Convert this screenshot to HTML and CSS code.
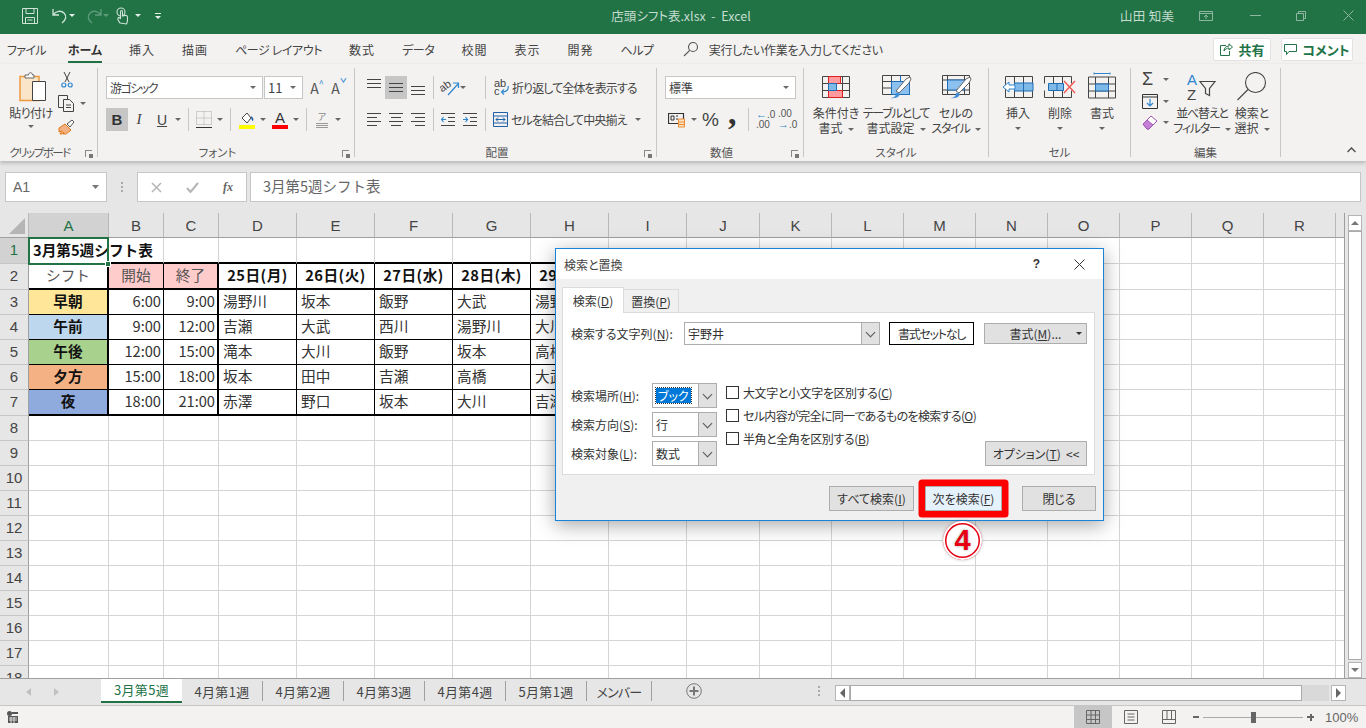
FILE: index.html
```html
<!DOCTYPE html>
<html lang="ja">
<head>
  <meta charset="UTF-8">
  <title>店頭シフト表.xlsx - Excel</title>
  <link rel="stylesheet" href="styles.css">
</head>
<body>
  <!-- title bar -->
  <header class="titlebar">
    <div class="qat">
      <svg class="qi-save" width="18" height="18" viewBox="0 0 18 18" fill="none" stroke="#cfe3d7"><path d="M1.5 1.5h15v15h-15zM5 1.5v5h8v-5M4.5 16.5v-6h9v6M6.5 13h5"/></svg>
      <svg class="qi-undo" width="18" height="18" viewBox="0 0 18 18" fill="none" stroke="#cfe3d7" stroke-width="1.3"><path d="M2 2v6h6M2 8c3-4 8-5 11-2s2 7-2 10"/></svg>
      <span class="caret caret-light"></span>
      <svg class="qi-redo" width="18" height="18" viewBox="0 0 18 18" fill="none" stroke="#5f9c7c" stroke-width="1.3"><path d="M16 2v6h-6M16 8c-3-4-8-5-11-2s-2 7 2 10"/></svg>
      <span class="caret caret-dim"></span>
      <svg class="qi-touch" width="14" height="18" viewBox="0 0 14 18" fill="none" stroke="#cfe3d7" stroke-width="1.1"><circle cx="5" cy="5" r="4"/><path d="M4 16c-1-2-3-3-2-5 1-1 2 0 2.500 1V5c0-2 2-2 2 0v4c2-1 5-1 5 1v3c0 2-.5 3-1 4z" fill="#217346"/></svg>
      <span class="caret caret-light caret-touch"></span>
      <span class="qi-more"></span>
    </div>
    <div class="doc-title">店頭シフト表.xlsx &nbsp;-&nbsp; Excel</div>
    <div class="user-name">山田 知美</div>
    <div class="win-btns">
      <svg width="14" height="10" viewBox="0 0 14 10" fill="none" stroke="#8fb8a2"><path d="M.5.5h13v9H.5zM.5 2.500h13M7 8V4.500M5 6l2-2 2 2"/></svg>
      <svg width="11" height="1" viewBox="0 0 11 1"><path d="M0 0h11v1H0z" fill="#8fb8a2"/></svg>
      <svg width="10" height="10" viewBox="0 0 10 10" fill="none" stroke="#8fb8a2"><path d="M.5 2.500h7v7h-7zM2.500 2.500v-2h7v7h-2"/></svg>
      <svg width="11" height="11" viewBox="0 0 11 11" stroke="#8fb8a2"><path d="M.5.5l10 10M10.500.5l-10 10"/></svg>
    </div>
  </header>

  <!-- ribbon tabs -->
  <nav class="tabs">
    <span class="tab-tight">ファイル</span>
    <span class="tab-on">ホーム</span>
    <span class="tab-kanji">挿入</span>
    <span class="tab-kanji">描画</span>
    <span class="tab-tight2">ページ レイアウト</span>
    <span class="tab-kanji">数式</span>
    <span class="tab-tight2">データ</span>
    <span class="tab-kanji">校閲</span>
    <span class="tab-kanji">表示</span>
    <span class="tab-kanji">開発</span>
    <span class="tab-tight2">ヘルプ</span>
    <div class="tell-me">
      <svg width="16" height="16" viewBox="0 0 16 16" fill="none" stroke="#555" stroke-width="1.1"><circle cx="10" cy="6" r="4.500"/><path d="M6.700 9.300L1 15"/></svg>
      <span>実行したい作業を入力してください</span>
    </div>
    <div class="tab-actions">
      <button class="pill pill-share"><svg width="14" height="13" viewBox="0 0 14 13" fill="none" stroke="#217346"><path d="M7 2.500H1.500v10h9V8M5 8c0-3 2-5 5-5V.8L13.500 4 10 7V5C8 5 6.500 6 5 8z"/></svg>共有</button>
      <button class="pill pill-comment"><svg width="13" height="13" viewBox="0 0 13 13" fill="none" stroke="#217346"><path d="M.5 1.500h12v7H5L2.500 11.500v-3h-2z"/></svg>コメント</button>
    </div>
  </nav>

  <!-- ribbon -->
  <section class="ribbon">
    <div class="group g-clip">
      <div class="clip-body">
        <div class="paste">
          <svg width="28" height="30" viewBox="0 0 28 30" fill="none"><path d="M1 4.500h19v24H1z" fill="#fbe5c8" stroke="#ed9b40" stroke-width="1.500"/><path d="M6 6V3h3.500c0-3 4-3 4 0H15v3z" fill="#fff" stroke="#666"/><path d="M13.500 9.500h13v19h-13z" fill="#fff" stroke="#444"/></svg>
          <span class="paste-label">貼り付け</span>
          <span class="caret"></span>
        </div>
        <div class="clip-tools">
          <svg class="ic-cut" width="12" height="17" viewBox="0 0 12 17" fill="none" stroke="#444"><path d="M3 1l5 10M9 1L4 11"/><circle cx="2.800" cy="14" r="2" stroke="#2e86d0" stroke-width="1.200"/><circle cx="9.200" cy="14" r="2" stroke="#2e86d0" stroke-width="1.200"/></svg>
          <div class="row-mid">
            <svg width="17" height="17" viewBox="0 0 17 17" fill="#f3f2f1" stroke="#444"><path d="M.5.500h9v12h-9z"/><path d="M5.500 4.500h6l4 4v8h-10zM8 10h5M8 12.500h5"/></svg>
            <span class="caret"></span>
          </div>
          <svg width="17" height="16" viewBox="0 0 17 16"><path d="M1 9l6-4 6 6-5 4H5l1-2-2 2H2l2-3-3 1z" fill="#f4b183" stroke="#e07b1a"/><path d="M9 5l5-4 2 2-4 5z" fill="#fff" stroke="#555"/></svg>
        </div>
      </div>
      <div class="group-label">クリップボード</div>
      <span class="launcher"></span>
    </div>

    <div class="group g-font">
      <div class="tool-row">
        <div class="combo combo-font"><span>游ゴシック</span><span class="caret"></span></div>
        <div class="combo combo-size"><span>11</span><span class="caret"></span></div>
        <span class="tool tool-grow">A<i>^</i></span>
        <span class="tool tool-grow">A<i class="down">ˇ</i></span>
      </div>
      <div class="tool-row row-second">
        <span class="tool tool-on fmt-b">B</span>
        <span class="tool fmt-i">I</span>
        <span class="tool fmt-u">U</span><span class="caret caret-gap"></span>
        <span class="sep"></span>
        <svg class="ic-border" width="16" height="18" viewBox="0 0 16 18" fill="none"><path d="M.5.500h15v13H.5zM8 .500v13M.5 7h15" stroke="#aaa" stroke-dasharray="1 1"/><path d="M0 16.500h16" stroke="#333"/></svg><span class="caret caret-gap"></span>
        <span class="sep"></span>
        <svg class="ic-fill" width="16" height="18" viewBox="0 0 16 18"><path d="M3 7l5-5 4 5-4 5z" fill="#fff" stroke="#444"/><path d="M12 5c2 1 3 3 2 5-1 0-2-2-2-5z" fill="#1f5fa8"/><path d="M0 14h16v4H0z" fill="#ff0"/></svg><span class="caret caret-gap"></span>
        <span class="font-color">A</span><span class="caret caret-gap"></span>
        <span class="sep"></span>
        <span class="phonetic">ア<b></b></span><span class="caret caret-phon"></span>
      </div>
      <div class="group-label">フォント</div>
      <span class="launcher"></span>
    </div>

    <div class="group g-align">
      <div class="tool-row">
        <span class="tool tool-top"><svg width="14" height="10" viewBox="0 0 14 10" stroke="#444"><path d="M0 .500h14M0 4.500h14M0 8.500h14" /></svg></span>
        <span class="tool tool-on"><svg width="14" height="10" viewBox="0 0 14 10" stroke="#444"><path d="M0 .500h14M0 4.500h14M0 8.500h14"/></svg></span>
        <span class="tool tool-low"><svg width="14" height="10" viewBox="0 0 14 10" stroke="#444"><path d="M0 .500h14M0 4.500h14M0 8.500h14"/></svg></span>
        <span class="sep"></span>
        <svg class="ic-orient" width="20" height="16" viewBox="0 0 20 16" fill="none"><text x="0" y="10" class="ic-text" transform="rotate(-35 5 8)">ab</text><path d="M8 15L18 4M13 3h5.500v5" stroke="#2e86d0" stroke-width="1.200"/></svg>
        <span class="caret"></span>
        <span class="sep sep-wide"></span>
        <svg class="ic-wrap" width="15" height="17" viewBox="0 0 15 17" fill="none"><text x="0" y="7.500" class="ic-text">ab</text><text x="0" y="16" class="ic-text">c</text><path d="M14 7c1 4-2 6-6 6M10 10.500L7.500 13l2.500 2.500" stroke="#2e86d0" stroke-width="1.200"/></svg>
        <span class="wide-label">折り返して全体を表示する</span>
      </div>
      <div class="tool-row row-second">
        <span class="tool"><svg width="14" height="13" viewBox="0 0 14 13" stroke="#444"><path d="M0 .500h14M0 4.500h10M0 8.500h14M0 12.500h10"/></svg></span>
        <span class="tool"><svg width="14" height="13" viewBox="0 0 14 13" stroke="#444"><path d="M0 .500h14M2 4.500h10M0 8.500h14M2 12.500h10"/></svg></span>
        <span class="tool"><svg width="14" height="13" viewBox="0 0 14 13" stroke="#444"><path d="M0 .500h14M4 4.500h10M0 8.500h14M4 12.500h10"/></svg></span>
        <span class="sep"></span>
        <svg width="14" height="13" viewBox="0 0 14 13" fill="none"><path d="M0 .500h14M7 4.500h7M7 8.500h7M0 12.500h14" stroke="#444"/><path d="M5 6.500H0M2.500 4L.5 6.500l2 2.500" stroke="#2e86d0" stroke-width="1.200"/></svg>
        <svg class="ic-indent2" width="14" height="13" viewBox="0 0 14 13" fill="none"><path d="M0 .500h14M7 4.500h7M7 8.500h7M0 12.500h14" stroke="#444"/><path d="M0 6.500h5M2.500 4l2 2.500-2 2.500" stroke="#2e86d0" stroke-width="1.200"/></svg>
        <span class="sep sep-merge"></span>
        <svg width="15" height="15" viewBox="0 0 15 15" fill="none"><path d="M.5.500h14v14H.5zM.5 4h14M.5 11h14" stroke="#1f5fa8"/><path d="M3 7.500h9M5 5.500l-2 2 2 2M10 5.500l2 2-2 2" stroke="#1f5fa8"/></svg>
        <span class="wide-label">セルを結合して中央揃え</span><span class="caret caret-merge"></span>
      </div>
      <div class="group-label">配置</div>
      <span class="launcher"></span>
    </div>

    <div class="group g-number">
      <div class="tool-row">
        <div class="combo combo-num"><span>標準</span><span class="caret"></span></div>
      </div>
      <div class="tool-row row-second">
        <svg class="ic-acct" width="18" height="16" viewBox="0 0 18 16" fill="none"><path d="M.5 1.500h15v10H.5z" stroke="#333" stroke-width="1.200"/><path d="M3 4h3v4H3zM8 4h2M8 7h2" stroke="#333"/><path d="M10.500 7h6v8h-6z" fill="#fbe5c8" stroke="#ed8b2e"/><path d="M10.500 10h6M10.500 12.500h6" stroke="#ed8b2e"/></svg>
        <span class="caret caret-gap"></span>
        <span class="num-pct">%</span>
        <span class="num-comma">,</span>
        <span class="sep"></span>
        <span class="num-dec"><em>←</em>.0<br>.00</span>
        <span class="num-dec num-dec2">.00<br><em>→</em>.0</span>
      </div>
      <div class="group-label">数値</div>
      <span class="launcher"></span>
    </div>

    <div class="group g-styles">
      <div class="big-row">
        <div class="big big-cond">
          <svg width="28" height="22" viewBox="0 0 28 22" fill="none"><path d="M.5.500h27v21H.5zM.5 7.500h27M.5 14.500h27M6.500.500v21M14.500.500v21M20.500.500v21" stroke="#444"/><path d="M6.500.500h12v7h-12zM6.500 14.500h14v7h-14z" fill="#ff9a9f" stroke="#e02020"/><path d="M6.500 7.500h8v7h-8z" fill="#7fb9e8" stroke="#1f6db5"/></svg>
          <span>条件付き</span><span>書式<i class="caret caret-in"></i></span>
        </div>
        <div class="big big-table">
          <svg class="ic-brush" width="30" height="24" viewBox="0 0 30 24" fill="none"><path d="M.5.500h27v19H.5zM.5 6.500h27M.5 13h27M9.500.500v19M18.500.500v19" stroke="#444"/><path d="M9.500 6.500h18v13h-18z" fill="#8cc0ee" stroke="#1f6db5"/><path d="M18.500 .5v6h9" stroke="#1f6db5"/><path d="M14 16l10-12 4-2 1 2-2 4-10 10z" fill="#fff" stroke="#666"/><path d="M8 23c3 0 6-1 6-5l3 0c2 3-2 6-9 5z" fill="#3f8ed8"/></svg>
          <span class="label-tight">テーブルとして</span><span>書式設定<i class="caret caret-in"></i></span>
        </div>
        <div class="big big-cell">
          <svg class="ic-brush" width="30" height="24" viewBox="0 0 30 24" fill="none"><path d="M.5.500h27v19H.5zM.5 5h27M5.500.500v19M.5 15h27M22.500.500v19" stroke="#444"/><path d="M5.500 5h17v10h-17z" fill="#8cc0ee" stroke="#1f6db5"/><path d="M14 16l10-12 4-2 1 2-2 4-10 10z" fill="#fff" stroke="#666"/><path d="M8 23c3 0 6-1 6-5l3 0c2 3-2 6-9 5z" fill="#3f8ed8"/></svg>
          <span>セルの</span><span class="label-tight">スタイル<i class="caret caret-in"></i></span>
        </div>
      </div>
      <div class="group-label">スタイル</div>
    </div>

    <div class="group g-cells">
      <div class="big-row">
        <div class="big big-cellbtn">
          <svg width="32" height="22" viewBox="0 0 32 22" fill="none"><path d="M3.500.500h27v21h-27zM.5 7.500M12.500.500v21M21.500.500v21" stroke="#444"/><path d="M12.500 7h18.500v8H12.500z" fill="#7fb9e8" stroke="#1f6db5"/><path d="M21.500 7v8" stroke="#1f6db5"/><path d="M1 11l6-5v3h6v4H7v3z" fill="#fff" stroke="#2e86d0"/></svg>
          <span>挿入</span><i class="caret caret-under"></i>
        </div>
        <div class="big big-cellbtn">
          <svg width="32" height="22" viewBox="0 0 32 22" fill="none"><path d="M.5.500h27M.5 21.500h27M.5.500v7M.5 14.500v7M9.500.500v7M9.500 14.500v7M18.500.500v7M18.500 14.500v7M27.500.500v7M27.500 14.500v7" stroke="#444"/><path d="M4.500 7.500h15v7h-15z" fill="#7fb9e8" stroke="#1f6db5"/><path d="M13 7.500v7" stroke="#1f6db5"/><path d="M20 5l11 12M31 5L20 17" stroke="#ef5350" stroke-width="1.300"/></svg>
          <span>削除</span><i class="caret caret-under"></i>
        </div>
        <div class="big big-cellbtn">
          <svg class="ic-fmt" width="28" height="27" viewBox="0 0 28 26" fill="none"><path d="M6 1h16M6 0v2M22 0v2" stroke="#2e86d0"/><path d="M.5 4.500h27v21H.5zM.5 11.500h27M.5 18.500h27M7.500 4.500v21M20.500 4.500v21" stroke="#444"/><path d="M7.500 11.500h13v7h-13z" fill="#7fb9e8" stroke="#1f6db5"/></svg>
          <span>書式</span><i class="caret caret-under"></i>
        </div>
      </div>
      <div class="group-label">セル</div>
    </div>

    <div class="group g-edit">
      <div class="edit-tools">
        <div class="row-mid"><span class="ic-sigma">Σ</span><span class="caret"></span></div>
        <div class="row-mid">
          <svg width="16" height="15" viewBox="0 0 16 15" fill="none"><path d="M.5 .5h15v14H.5z" stroke="#333"/><path d="M.5 3h15" stroke="#333"/><path d="M8 5v7M5 9l3 3 3-3" stroke="#2e86d0" stroke-width="1.200"/></svg>
          <span class="caret"></span>
        </div>
        <div class="row-mid">
          <svg width="16" height="15" viewBox="0 0 16 15"><path d="M1 9l8-8 6 5-8 8H5z" fill="#fff" stroke="#a055b5"/><path d="M1 9l4-4 6 5-4 4H5z" fill="#c780d8" stroke="#a055b5"/></svg>
          <span class="caret"></span>
        </div>
      </div>
      <div class="big big-sort">
        <svg width="30" height="28" viewBox="0 0 30 28" fill="none"><text x="0" y="12" class="ic-az ic-a">A</text><text x="0" y="27" class="ic-az">Z</text><path d="M13 9h15l-5.500 7v7l-4-2v-5z" stroke="#444" stroke-width="1.200"/></svg>
        <span class="label-tight">並べ替えと</span><span class="label-tight">フィルター<i class="caret caret-in"></i></span>
      </div>
      <div class="big big-find">
        <svg width="30" height="29" viewBox="0 0 30 29" fill="none" stroke="#444" stroke-width="1.100"><circle cx="18.500" cy="10.500" r="10"/><path d="M11 17.500L.5 28"/></svg>
        <span>検索と</span><span>選択<i class="caret caret-in"></i></span>
      </div>
      <div class="group-label">編集</div>
    </div>
    <svg class="ribbon-collapse" width="9" height="6" viewBox="0 0 9 6" fill="none" stroke="#555" stroke-width="1.500"><path d="M.5 5l4-4 4 4"/></svg>
  </section>

  <!-- formula bar -->
  <div class="formula">
    <div class="namebox"><span>A1</span><svg width="7" height="4" viewBox="0 0 7 4"><path d="M0 0h7L3.500 4z" fill="#777"/></svg></div>
    <span class="formula-dots"></span>
    <div class="fx-box">
      <svg width="11" height="11" viewBox="0 0 11 11" stroke="#b5b5b5" stroke-width="1.500"><path d="M1 1l9 9M10 1l-9 9"/></svg>
      <svg width="13" height="11" viewBox="0 0 13 11" fill="none" stroke="#b5b5b5" stroke-width="2"><path d="M1 6l3.500 4L12 1"/></svg>
      <span class="fx">fx</span>
    </div>
    <div class="formula-input">3月第5週シフト表</div>
  </div>

  <!-- sheet -->
  <main class="sheet">
    <div class="grid-wrap">
      <table class="grid">
        <colgroup>
          <col class="c-row"><col class="c-a"><col class="c-bc"><col class="c-bc">
          <col class="c-d"><col class="c-d"><col class="c-d"><col class="c-d"><col class="c-d"><col class="c-d">
          <col class="c-j"><col class="c-k"><col class="c-k"><col class="c-k"><col class="c-k"><col class="c-k"><col class="c-k"><col class="c-k"><col class="c-k"><col class="c-k">
        </colgroup>
        <thead>
          <tr>
            <th class="corner"><span></span></th><th class="active-h">A</th><th>B</th><th>C</th><th>D</th><th>E</th><th>F</th><th>G</th><th>H</th><th>I</th><th>J</th><th>K</th><th>L</th><th>M</th><th>N</th><th>O</th><th>P</th><th>Q</th><th>R</th><th></th>
          </tr>
        </thead>
        <tbody>
          <tr class="r-title"><th class="active-h">1</th><td class="title-cell">3月第5週シフト表</td><td></td><td></td><td></td><td></td><td></td><td></td><td></td><td></td><td></td><td></td><td></td><td></td><td></td><td></td><td></td><td></td><td></td><td></td></tr>
          <tr class="r-duty r-head"><th>2</th><td class="ctr">シフト</td><td class="ctr f-time">開始</td><td class="ctr f-time">終了</td><td class="day">25日(月)</td><td class="day">26日(火)</td><td class="day">27日(水)</td><td class="day">28日(木)</td><td class="day">29日(金)</td><td></td><td></td><td></td><td></td><td></td><td></td><td></td><td></td><td></td><td></td><td></td></tr>
          <tr class="r-duty"><th>3</th><td class="shift f-early">早朝</td><td class="num">6:00</td><td class="num">9:00</td><td>湯野川</td><td>坂本</td><td>飯野</td><td>大武</td><td>湯野川</td><td></td><td></td><td></td><td></td><td></td><td></td><td></td><td></td><td></td><td></td><td></td></tr>
          <tr class="r-duty"><th>4</th><td class="shift f-am">午前</td><td class="num">9:00</td><td class="num">12:00</td><td>吉瀬</td><td>大武</td><td>西川</td><td>湯野川</td><td>大川</td><td></td><td></td><td></td><td></td><td></td><td></td><td></td><td></td><td></td><td></td><td></td></tr>
          <tr class="r-duty"><th>5</th><td class="shift f-pm">午後</td><td class="num">12:00</td><td class="num">15:00</td><td>滝本</td><td>大川</td><td>飯野</td><td>坂本</td><td>高橋</td><td></td><td></td><td></td><td></td><td></td><td></td><td></td><td></td><td></td><td></td><td></td></tr>
          <tr class="r-duty"><th>6</th><td class="shift f-eve">夕方</td><td class="num">15:00</td><td class="num">18:00</td><td>坂本</td><td>田中</td><td>吉瀬</td><td>高橋</td><td>大武</td><td></td><td></td><td></td><td></td><td></td><td></td><td></td><td></td><td></td><td></td><td></td></tr>
          <tr class="r-duty r-last"><th>7</th><td class="shift f-night">夜</td><td class="num">18:00</td><td class="num">21:00</td><td>赤澤</td><td>野口</td><td>坂本</td><td>大川</td><td>吉瀬</td><td></td><td></td><td></td><td></td><td></td><td></td><td></td><td></td><td></td><td></td><td></td></tr>
          <tr><th>8</th><td></td><td></td><td></td><td></td><td></td><td></td><td></td><td></td><td></td><td></td><td></td><td></td><td></td><td></td><td></td><td></td><td></td><td></td><td></td></tr>
          <tr><th>9</th><td></td><td></td><td></td><td></td><td></td><td></td><td></td><td></td><td></td><td></td><td></td><td></td><td></td><td></td><td></td><td></td><td></td><td></td><td></td></tr>
          <tr><th>10</th><td></td><td></td><td></td><td></td><td></td><td></td><td></td><td></td><td></td><td></td><td></td><td></td><td></td><td></td><td></td><td></td><td></td><td></td><td></td></tr>
          <tr><th>11</th><td></td><td></td><td></td><td></td><td></td><td></td><td></td><td></td><td></td><td></td><td></td><td></td><td></td><td></td><td></td><td></td><td></td><td></td><td></td></tr>
          <tr><th>12</th><td></td><td></td><td></td><td></td><td></td><td></td><td></td><td></td><td></td><td></td><td></td><td></td><td></td><td></td><td></td><td></td><td></td><td></td><td></td></tr>
          <tr><th>13</th><td></td><td></td><td></td><td></td><td></td><td></td><td></td><td></td><td></td><td></td><td></td><td></td><td></td><td></td><td></td><td></td><td></td><td></td><td></td></tr>
          <tr><th>14</th><td></td><td></td><td></td><td></td><td></td><td></td><td></td><td></td><td></td><td></td><td></td><td></td><td></td><td></td><td></td><td></td><td></td><td></td><td></td></tr>
          <tr><th>15</th><td></td><td></td><td></td><td></td><td></td><td></td><td></td><td></td><td></td><td></td><td></td><td></td><td></td><td></td><td></td><td></td><td></td><td></td><td></td></tr>
          <tr><th>16</th><td></td><td></td><td></td><td></td><td></td><td></td><td></td><td></td><td></td><td></td><td></td><td></td><td></td><td></td><td></td><td></td><td></td><td></td><td></td></tr>
          <tr><th>17</th><td></td><td></td><td></td><td></td><td></td><td></td><td></td><td></td><td></td><td></td><td></td><td></td><td></td><td></td><td></td><td></td><td></td><td></td><td></td></tr>
          <tr><th>18</th><td></td><td></td><td></td><td></td><td></td><td></td><td></td><td></td><td></td><td></td><td></td><td></td><td></td><td></td><td></td><td></td><td></td><td></td><td></td></tr>
        </tbody>
      </table>
      <div class="cell-cursor"><span></span></div>
    </div>
    <div class="vscroll">
      <span class="vbtn"><i class="tri-up"></i></span>
      <span class="vthumb"></span>
      <span class="vbtn"><i class="tri-down"></i></span>
    </div>
  </main>

  <!-- sheet tabs -->
  <div class="sheetbar">
    <div class="sheet-nav"><i class="nav-l"></i><i class="nav-r"></i></div>
    <div class="sheet-tabs">
      <span class="sheet-on">3月第5週</span>
      <span>4月第1週</span>
      <span>4月第2週</span>
      <span>4月第3週</span>
      <span>4月第4週</span>
      <span>5月第1週</span>
      <span class="sheet-last">メンバー</span>
    </div>
    <svg class="sheet-add" width="16" height="16" viewBox="0 0 16 16" fill="none" stroke="#777"><circle cx="8" cy="8" r="7.300"/><path d="M8 3.500v9M3.500 8h9" stroke-width="2"/></svg>
    <span class="bar-dots"></span>
    <div class="hscroll">
      <span class="hbtn"><i class="tri-left"></i></span>
      <span class="hthumb"></span>
      <span class="htrack"></span>
      <span class="hbtn"><i class="tri-right"></i></span>
    </div>
  </div>

  <!-- status bar -->
  <footer class="statusbar">
    <svg width="11" height="12" viewBox="0 0 11 12" fill="#555"><circle cx="2.500" cy="2.500" r="2.500"/><path d="M5 1h6v2H5zM1 5h10v7H1z"/><path d="M2 7h8M2 9h8M4 6v6M7 6v6" stroke="#f3f2f1" stroke-width=".8"/></svg>
    <div class="views">
      <span class="view view-on"><svg width="14" height="14" viewBox="0 0 14 14" fill="none" stroke="#666"><path d="M.5.500h13v13H.5zM.5 5h13M.5 9.500h13M5 .500v13M9.500.500v13"/></svg></span>
      <span class="view"><svg width="14" height="14" viewBox="0 0 14 14" fill="none" stroke="#666"><path d="M.5.500h13v13H.5zM3.500 4h7M3.500 7h7M3.500 10h7"/></svg></span>
      <span class="view"><svg width="14" height="14" viewBox="0 0 14 14" fill="none" stroke="#666"><path d="M.5.500h13v13H.5zM.5 9.500h13M5 .500v9M9.500.500v9"/></svg></span>
    </div>
    <div class="zoom">
      <span class="z-minus"></span>
      <span class="z-track"><i></i></span>
      <span class="z-plus"></span>
      <span class="z-val">100%</span>
    </div>
  </footer>

  <!-- find dialog -->
  <div class="dialog">
    <div class="dlg-title">
      <span>検索と置換</span>
      <span class="dlg-help">?</span>
      <svg width="11" height="11" viewBox="0 0 11 11" stroke="#333"><path d="M.5.500l10 10M10.500.500l-10 10"/></svg>
    </div>
    <div class="dlg-body">
      <div class="dlg-tabs">
        <span class="dlg-tab dlg-tab-on"><span>検索(<u>D</u>)</span></span>
        <span class="dlg-tab"><span>置換(<u>P</u>)</span></span>
      </div>
      <div class="dlg-panel">
        <div class="find-row">
          <label class="find-label">検索する文字列(<u>N</u>):</label>
          <div class="dlg-combo"><span>宇野井</span><i class="chev"></i></div>
          <span class="fmt-none">書式セットなし</span>
          <button class="dbtn fmt-btn">書式(<u>M</u>)...<i class="caret caret-dark"></i></button>
        </div>
        <div class="find-opts">
          <div class="opt-selects">
            <label>検索場所(<u>H</u>):</label>
            <div class="dlg-sel"><span class="sel-on">ブック</span><i class="chev"></i></div>
            <label>検索方向(<u>S</u>):</label>
            <div class="dlg-sel"><span>行</span><i class="chev"></i></div>
            <label>検索対象(<u>L</u>):</label>
            <div class="dlg-sel"><span>数式</span><i class="chev"></i></div>
          </div>
          <div class="opt-checks">
            <label><i class="chk"></i><span>大文字と小文字を区別する(<u>C</u>)</span></label>
            <label><i class="chk"></i><span class="check-long">セル内容が完全に同一であるものを検索する(<u>O</u>)</span></label>
            <label><i class="chk"></i><span>半角と全角を区別する(<u>B</u>)</span></label>
          </div>
          <button class="dbtn opt-btn">オプション(<u>T</u>) &nbsp;&lt;&lt;</button>
        </div>
      </div>
      <div class="dlg-actions">
        <button class="dbtn act-all">すべて検索(<u>I</u>)</button>
        <button class="dbtn act-next">次を検索(<u>F</u>)</button>
        <button class="dbtn act-close">閉じる</button>
      </div>
    </div>
  </div>

  <!-- callout number -->
  <div class="callout"><span>4</span></div>
</body>
</html>
```

FILE: styles.css
```css
* {
  box-sizing: border-box;
}

html, body {
  margin: 0;
  height: 100%;
}

body {
  position: relative;
  width: 1366px;
  height: 728px;
  overflow: hidden;
  font-family: "Noto Sans CJK JP", sans-serif;
  font-size: 12px;
  font-feature-settings: "palt";
  color: #444;
  background: #e6e6e6;
}

svg {
  display: block;
  flex: none;
}

i {
  font-style: normal;
}

/* title bar */
.titlebar {
  display: flex;
  align-items: center;
  height: 34px;
  padding-bottom: 3px;
  background: #217346;
  color: #c4dccf;
}

.qat {
  display: flex;
  align-items: center;
  width: 540px;
  padding-left: 21px;
}

.qi-undo { margin-left: 12px; }
.qi-redo { margin-left: 10px; }
.qi-touch { margin-left: 7px; }
.caret-touch { margin-left: 5px; }

.caret {
  display: inline-block;
  flex: none;
  width: 0;
  height: 0;
  border-left: 3.500px solid transparent;
  border-right: 3.500px solid transparent;
  border-top: 3.500px solid #666;
}

.caret-light { border-top-color: #e4efe9; }
.caret-dim { border-top-color: #5f9c7c; }

.qi-more {
  width: 6px;
  height: 6px;
  margin-left: 14px;
  border-top: 1px solid #e4efe9;
  position: relative;
}

.qi-more::after {
  content: "";
  position: absolute;
  left: 0;
  top: 2px;
  border-left: 3px solid transparent;
  border-right: 3px solid transparent;
  border-top: 3px solid #e4efe9;
}

.doc-title {
  width: 300px;
  font-size: 12.500px;
  text-align: center;
  margin-left: -9px;
}

.user-name {
  margin-left: 289px;
  font-size: 12.500px;
  letter-spacing: .3px;
}

.win-btns {
  display: flex;
  align-items: center;
  margin-left: 25px;
}

.win-btns svg:nth-child(2) { margin-left: 37px; }
.win-btns svg:nth-child(3) { margin-left: 35px; }
.win-btns svg:nth-child(4) { margin-left: 37px; }

/* tabs */
.tabs {
  display: flex;
  align-items: center;
  gap: 27px;
  height: 30px;
  padding: 0 13px 0 7px;
  background: #f3f2f1;
  font-size: 12px;
  color: #444;
}

.tab-tight { letter-spacing: -.7px; }
.tab-tight2 { letter-spacing: -.4px; }
.tab-kanji { letter-spacing: 1px; }

.tab-on {
  position: relative;
  margin-left: -5px;
  font-weight: 700;
  color: #333;
}

.tab-on::after {
  content: "";
  position: absolute;
  left: 0;
  right: 0;
  top: 20px;
  height: 2px;
  background: #217346;
}

.tell-me {
  display: flex;
  align-items: center;
  gap: 10px;
  margin-left: 2px;
  letter-spacing: -.3px;
}

.tab-actions {
  display: flex;
  gap: 10px;
  margin-left: auto;
}

.pill {
  display: flex;
  align-items: center;
  justify-content: center;
  height: 23px;
  gap: 5px;
  padding: 0;
  background: #fff;
  border: 1px solid #e3e2e1;
  border-radius: 2px;
  font: inherit;
  font-size: 13px;
  font-weight: 700;
  color: #217346;
}

.pill-share { width: 58px; }
.pill-comment { width: 72px; }

/* ribbon */
.ribbon {
  position: relative;
  z-index: 2;
  display: flex;
  height: 97px;
  padding-top: 4px;
  background: #f3f2f1;
  box-shadow: 0 2px 4px rgba(0, 0, 0, .22);
}

.group {
  position: relative;
  height: 89px;
  border-right: 1px solid #c6c6c6;
}

.g-clip { width: 98px; }
.g-font { width: 257px; padding: 8px 0 0 8px; }
.g-align { width: 302px; padding: 8px 0 0 8px; }
.g-number { width: 147px; padding: 8px 0 0 8px; }
.g-styles { width: 185px; }
.g-cells { width: 142px; }
.g-edit { width: 150px; display: flex; }

.group-label {
  position: absolute;
  left: 0;
  right: 0;
  bottom: -3px;
  height: 16px;
  line-height: 16px;
  font-size: 11.500px;
  text-align: center;
  color: #555;
}

.g-clip .group-label { padding-right: 18px; letter-spacing: -1.500px; }
.g-font .group-label, .g-align .group-label, .g-number .group-label { padding-right: 17px; }

.launcher {
  position: absolute;
  right: 5px;
  bottom: 0;
  width: 7px;
  height: 7px;
  border-left: 1px solid #888;
  border-top: 1px solid #888;
}

.launcher::after {
  content: "";
  position: absolute;
  right: -1px;
  bottom: -1px;
  width: 4px;
  height: 4px;
  background: #777;
}

.tool-row {
  display: flex;
  align-items: center;
  height: 23px;
}

.row-second { margin-top: 9px; }

.tool {
  display: flex;
  align-items: center;
  justify-content: center;
  flex: none;
  width: 22px;
  height: 23px;
}

.tool-on { background: #c6c6c6; }
.tool-low svg { margin-top: 6px; }
.tool-top svg { margin-top: -8px; }

.sep {
  flex: none;
  width: 1px;
  height: 23px;
  margin: 0 7px;
  background: #c6c6c6;
}

.caret-gap { margin-left: 5px; }

.combo {
  display: flex;
  align-items: center;
  justify-content: space-between;
  height: 23px;
  padding: 0 6px 0 3px;
  background: #fff;
  border: 1px solid #c6c6c6;
  color: #444;
}

.combo-font { width: 157px; margin-right: 1px; letter-spacing: -1.500px; }
.combo-size { width: 39px; font-size: 13px; }
.combo-num { width: 131px; font-size: 12px; }

.tool-grow {
  width: 22px;
  margin-left: 0;
  font-size: 14px;
  color: #555;
  position: relative;
}

.tool-grow i {
  font-size: 9px;
  color: #2e86d0;
  margin-top: -9px;
}

.tool-grow i.down { font-size: 12px; margin-top: -8px; }

.combo-size + .tool-grow { margin-left: 3px; }

.fmt-b { font: 700 15px "Liberation Sans", sans-serif; color: #333; }
.fmt-i { font: italic 15px "Liberation Serif", serif; color: #444; }
.fmt-u { font: 14px "Liberation Sans", sans-serif; text-decoration: underline; color: #444; width: 18px; margin-left: 3px; }
.fmt-u + .caret { margin-left: 4px; }

.ic-fill { margin: 0 0 0 1px; }

.font-color {
  width: 16px;
  margin-left: 6px;
  height: 18px;
  border-bottom: 4px solid #f00;
  font: 15px/14px "Liberation Sans", sans-serif;
  text-align: center;
  color: #333;
}

.phonetic {
  position: relative;
  width: 12px;
  margin-left: 2px;
  height: 18px;
  font-size: 9px;
  line-height: 11px;
  text-align: center;
  color: #888;
}

.phonetic b {
  display: block;
  height: 6px;
  margin-top: 1px;
  background: repeating-linear-gradient(#999 0 1px, transparent 1px 2px);
}

.caret-phon { margin-left: 7px; }

.ic-text {
  font: 11px "Liberation Sans", sans-serif;
  fill: #444;
}

.g-align .sep { margin: 0 7px 0 4px; }
.ic-orient { margin-left: -1px; }
.g-align .sep-wide { margin: 0 8px 0 19px; }
.wide-label { margin-left: 3px; font-size: 12px; color: #444; white-space: nowrap; letter-spacing: -.9px; }
.ic-indent2 { margin-left: 8px; }
.g-align .sep-merge { margin: 0 7px 0 8px; }
.ic-merge { margin-left: 0; }
.caret-merge { margin-left: 8px; }

.ic-acct { margin-left: 3px; }
.num-pct { width: 18px; margin-left: 5px; font: 19px "Liberation Sans", sans-serif; color: #444; }
.num-comma { width: 10px; margin: 0 0 14px 8px; font: 700 34px/14px "Liberation Serif", serif; color: #333; }
.g-number .sep { margin: 0 7px 0 10px; }
.num-dec { width: 20px; font: 10px/10px "Liberation Sans", sans-serif; color: #555; }
.num-dec2 { margin-left: 2px; }
.num-dec em { font-style: normal; color: #2e86d0; font-size: 11px; }

.big-row {
  display: flex;
  padding-left: 2px;
}

.big {
  display: flex;
  flex-direction: column;
  align-items: center;
  padding-top: 7px;
  line-height: 15px;
  white-space: nowrap;
  color: #444;
}

.big svg { height: 24px; margin-bottom: 6px; }
.label-tight { letter-spacing: -1.200px; }
.ic-brush { margin-left: 2px; }
.big-cond { width: 60px; }
.big-table { width: 60px; }
.big-cell { width: 60px; }
.big-cellbtn { width: 42px; }
.g-cells .big-row { padding-left: 8px; }
.g-styles .big-row { padding-left: 2px; }
.big .ic-fmt { height: 27px; margin-top: -3px; }
.caret-in { margin-left: 5px; vertical-align: 2px; }
.caret-under { margin-top: 7px; }

.paste {
  display: flex;
  flex-direction: column;
  align-items: center;
  flex: none;
  width: 58px;
  padding: 4px 0 0 4px;
}

.paste svg { margin-left: 4px; }
.paste-label { margin-top: 3px; font-size: 12px; line-height: 15px; color: #444; letter-spacing: -.5px; }
.paste .caret { margin-top: 5px; }

.clip-body { display: flex; }

.clip-tools {
  display: flex;
  flex-direction: column;
  align-items: flex-start;
  gap: 7px;
  padding-top: 3px;
}

.ic-cut { margin-left: 3px; }

.row-mid {
  display: flex;
  align-items: center;
  gap: 5px;
}

.edit-tools {
  display: flex;
  flex-direction: column;
  gap: 6px;
  width: 38px;
  flex: none;
  padding: 2px 0 0 11px;
}

.ic-sigma {
  width: 16px;
  font: 18px/18px "Liberation Sans", sans-serif;
  color: #444;
}

.big-sort { width: 66px; padding-top: 4px; }
.big-find { width: 34px; padding-top: 4px; }
.big-sort svg, .big-find svg { height: 29px; margin-bottom: 4px; }

.ic-az { font: 15px "Liberation Sans", sans-serif; fill: #444; }
.ic-a { fill: #2e86d0; }

.ribbon-collapse {
  position: absolute;
  left: 1347px;
  top: 83px;
}

/* formula bar */
.formula {
  display: flex;
  align-items: flex-start;
  height: 52px;
  padding: 11px 5px 0;
  background: #e6e6e6;
}

.namebox {
  display: flex;
  align-items: center;
  justify-content: space-between;
  width: 102px;
  height: 30px;
  padding: 0 7px;
  background: #fff;
  border: 1px solid #c6c6c6;
  font: 14px "Liberation Sans", sans-serif;
  color: #666;
}

.formula-dots {
  width: 2px;
  height: 10px;
  margin: 10px 14px 0 14px;
  background: repeating-linear-gradient(#aaa 0 2px, transparent 2px 4px);
}

.fx-box {
  display: flex;
  align-items: center;
  justify-content: space-between;
  width: 110px;
  height: 30px;
  padding: 0 13px;
  background: #fff;
  border: 1px solid #c6c6c6;
}

.fx {
  font: italic 700 12px "Liberation Serif", serif;
  color: #666;
}

.formula-input {
  flex: 1;
  height: 30px;
  margin-left: 3px;
  padding-left: 12px;
  line-height: 26px;
  background: #fff;
  border: 1px solid #c6c6c6;
  font-size: 14.500px;
  font-feature-settings: normal;
  color: #666;
}

/* sheet */
.sheet {
  display: flex;
  height: 465px;
}

.grid-wrap {
  position: relative;
  width: 1345px;
  height: 465px;
  overflow: hidden;
  border-right: 1px solid #9f9f9f;
}

.grid {
  table-layout: fixed;
  width: 1408px;
  border-collapse: separate;
  border-spacing: 0;
  background: #fff;
  font-feature-settings: normal;
  color: #333;
}

.c-row { width: 29px; }
.c-a { width: 80px; }
.c-bc { width: 55px; }
.c-d { width: 78px; }
.c-j { width: 73px; }
.c-k { width: 72px; }

.grid th {
  padding: 0 0 2px;
  background: #e6e6e6;
  border-right: 1px solid #c6c6c6;
  border-bottom: 1px solid #c6c6c6;
  font-weight: 400;
  font-size: 14px;
  color: #444;
}

.grid thead th {
  height: 25px;
  padding: 0;
  border-bottom: 1px solid #9f9f9f;
  border-right-color: #b8b8b8;
  font-family: "Liberation Sans", sans-serif;
  font-size: 15px;
}

.grid tbody th {
  border-right: 1px solid #9f9f9f;
  font-family: "Liberation Sans", sans-serif;
  font-size: 15px;
}

.grid .active-h {
  background: #d2d2d2;
  color: #217346;
}

.corner { position: relative; }

.corner span {
  position: absolute;
  right: 3px;
  bottom: 3px;
  border-left: 16px solid transparent;
  border-bottom: 16px solid #b5b5b5;
}

.grid td {
  height: 25px;
  padding: 0 2px 2px 4px;
  border-right: 1px solid #d4d4d4;
  border-bottom: 1px solid #d4d4d4;
  white-space: nowrap;
  font-size: 14.670px;
  line-height: 18px;
  overflow: visible;
}

.grid .r-title td, .grid .r-title th { height: 26px; }
.grid .r-title td:nth-child(n+3):nth-child(-n+9) { border-bottom: 2px solid #000; }
.grid .title-cell { font-weight: 700; color: #111; border-right-color: transparent; }

.grid .r-duty td:nth-child(-n+9) { border-right-color: #000; border-bottom-color: #000; }
.grid .r-duty td:nth-child(2), .grid .r-duty td:nth-child(4) { border-right: 2px solid #000; }
.grid .r-head td:nth-child(-n+9), .grid .r-last td:nth-child(-n+9) { border-bottom-width: 2px; }
.grid .r-head td, .grid .r-head th, .grid .r-last td, .grid .r-last th { height: 26px; }

.ctr { text-align: center; color: #555; }
.grid .ctr { padding: 0 2px 2px; }
.grid .day { padding: 0 0 2px; text-align: center; font-weight: 700; color: #111; letter-spacing: .5px; }
.grid .shift { padding: 0 0 2px; text-align: center; font-weight: 700; color: #111; }
.num { text-align: right; }

.f-time { background: #ffcccc; }
.f-early { background: #ffe699; }
.f-am { background: #bdd7ee; }
.f-pm { background: #a9d18e; }
.f-eve { background: #f4b183; }
.f-night { background: #8faadc; }

.cell-cursor {
  position: absolute;
  left: 28px;
  top: 24px;
  width: 81px;
  height: 28px;
  border: 2px solid #217346;
  pointer-events: none;
}

.cell-cursor span {
  position: absolute;
  right: -4px;
  bottom: -4px;
  width: 6px;
  height: 6px;
  background: #217346;
  border: 1px solid #fff;
}

.vscroll {
  display: flex;
  flex-direction: column;
  width: 21px;
  padding: 2px 4px 0 3px;
}

.vbtn {
  display: flex;
  align-items: center;
  justify-content: center;
  flex: none;
  height: 16px;
  background: #fff;
  border: 1px solid #b5b5b5;
}

.vthumb {
  flex: 1;
  margin-bottom: 2px;
  background: #fff;
  border: 1px solid #ababab;
}

.tri-up { border: 4px solid transparent; border-top: 0; border-bottom: 4px solid #777; }
.tri-down { border: 4px solid transparent; border-bottom: 0; border-top: 4px solid #777; }
.tri-left { border: 5px solid transparent; border-left: 0; border-right: 5px solid #666; }
.tri-right { border: 5px solid transparent; border-right: 0; border-left: 5px solid #666; }

/* sheet tabs */
.sheetbar {
  display: flex;
  align-items: flex-start;
  height: 28px;
  background: #e6e6e6;
  border-top: 1px solid #9f9f9f;
  border-bottom: 1px solid #c6c6c6;
}

.sheet-nav {
  display: flex;
  gap: 23px;
  width: 101px;
  padding: 9px 0 0 26px;
}

.nav-l { border: 4px solid transparent; border-left: 0; border-right: 5px solid #c0c0c0; }
.nav-r { border: 4px solid transparent; border-right: 0; border-left: 5px solid #c0c0c0; }

.sheet-tabs {
  display: flex;
  height: 24px;
  font-size: 13px;
  letter-spacing: .3px;
}

.sheet-tabs span {
  display: flex;
  align-items: center;
  justify-content: center;
  width: 81px;
  height: 20px;
  margin-top: 2px;
  border-right: 1px solid #9f9f9f;
  color: #444;
}

.sheet-tabs .sheet-on {
  height: 24px;
  margin-top: 0;
  padding-bottom: 2px;
  background: #fff;
  border-right: 0;
  border-bottom: 2px solid #217346;
  color: #217346;
}

.sheet-tabs .sheet-last { width: 65px; letter-spacing: -.8px; }

.sheet-add { margin: 4px 0 0 34px; }

.bar-dots {
  width: 2px;
  height: 10px;
  margin: 7px 15px 0 116px;
  background: repeating-linear-gradient(#aaa 0 2px, transparent 2px 4px);
}

.hscroll {
  display: flex;
  width: 511px;
  height: 16px;
  margin-top: 6px;
}

.hbtn {
  display: flex;
  align-items: center;
  justify-content: center;
  flex: none;
  width: 15px;
  background: #fff;
  border: 1px solid #b5b5b5;
}

.hthumb {
  width: 452px;
  background: #fff;
  border: 1px solid #ababab;
}

.htrack {
  flex: 1;
  background: #d9d9d9;
  margin-right: 2px;
}

/* status bar */
.statusbar {
  display: flex;
  align-items: center;
  height: 22px;
  padding-left: 7px;
  background: #f3f2f1;
}

.views {
  display: flex;
  margin-left: 1056px;
}

.view {
  display: flex;
  align-items: center;
  justify-content: center;
  width: 38px;
  height: 22px;
}

.view-on { background: #c6c6c6; }

.zoom {
  display: flex;
  align-items: center;
  margin-left: 5px;
}

.z-minus {
  width: 6px;
  height: 2px;
  background: #666;
}

.z-track {
  position: relative;
  width: 100px;
  height: 1px;
  margin: 0 4px 0 4px;
  background: #aaa;
}

.z-track i {
  position: absolute;
  left: 48px;
  top: -5px;
  width: 5px;
  height: 11px;
  background: #666;
}

.z-plus {
  position: relative;
  width: 7px;
  height: 2px;
  background: #666;
}

.z-plus::after {
  content: "";
  position: absolute;
  left: 2.500px;
  top: -2.500px;
  width: 2px;
  height: 7px;
  background: #666;
}

.z-val {
  margin-left: 11px;
  font: 13px "Liberation Sans", sans-serif;
  color: #666;
}

/* dialog */
.dialog {
  position: absolute;
  left: 555px;
  top: 248px;
  z-index: 5;
  width: 549px;
  height: 273px;
  background: #f0f0f0;
  border: 1px solid #1883d7;
  box-shadow: 0 4px 18px rgba(0, 0, 0, .35);
  color: #333;
}

.dlg-title {
  display: flex;
  align-items: center;
  height: 30px;
  padding: 0 18px 0 8px;
  background: #fff;
  color: #444;
}

.dlg-help {
  margin: 0 34px 0 auto;
  font: 700 12px "Liberation Sans", sans-serif;
  color: #333;
}

.dlg-body {
  padding: 8px 7px 0 6px;
}

.dlg-tabs {
  display: flex;
  align-items: flex-end;
  height: 25px;
}

.dlg-tab {
  display: flex;
  align-items: center;
  justify-content: center;
  width: 55px;
  height: 23px;
  background: #f0f0f0;
  border: 1px solid #dcdcdc;
  border-bottom: 0;
  border-left: 0;
}

.dlg-tab-on {
  position: relative;
  z-index: 1;
  width: 62px;
  height: 26px;
  margin-bottom: -1px;
  background: #fff;
  border-left: 1px solid #dcdcdc;
}

.dlg-panel {
  width: 533px;
  height: 163px;
  padding: 9px 7px 0 8px;
  background: #fff;
  border: 1px solid #dcdcdc;
}

.find-row {
  display: flex;
  align-items: center;
  height: 23px;
}

.find-label { width: 113px; }

.dlg-combo {
  display: flex;
  justify-content: space-between;
  align-items: center;
  width: 196px;
  height: 23px;
  padding-left: 3px;
  border: 1px solid #adadad;
}

.chev {
  display: flex;
  align-items: center;
  justify-content: center;
  flex: none;
  width: 18px;
  height: 100%;
  background: #e1e1e1;
  border-left: 1px solid #adadad;
  position: relative;
}

.chev::after {
  content: "";
  width: 6px;
  height: 6px;
  margin-top: -3px;
  border-right: 1px solid #555;
  border-bottom: 1px solid #555;
  transform: rotate(45deg);
}

.fmt-none {
  width: 85px;
  height: 23px;
  margin-left: 9px;
  line-height: 21px;
  text-align: center;
  border: 1px solid #000;
  letter-spacing: -1.300px;
}

.dbtn {
  padding: 0;
  background: #e1e1e1;
  border: 1px solid #adadad;
  font: inherit;
  color: #333;
  white-space: nowrap;
}

.fmt-btn {
  position: relative;
  width: 103px;
  height: 21px;
  margin-left: 10px;
}

.caret-dark {
  position: absolute;
  right: 4px;
  top: 8px;
  border-top-color: #333;
}

.find-opts {
  display: flex;
  height: 83px;
  margin-top: 38px;
}

.opt-selects {
  display: grid;
  grid-template-columns: 81px 65px;
  grid-auto-rows: 25px;
  row-gap: 4px;
  align-items: center;
}

.dlg-sel {
  display: flex;
  justify-content: space-between;
  align-items: center;
  height: 25px;
  border: 1px solid #adadad;
  padding-left: 3px;
}

.sel-on {
  padding: 0 2px;
  background: #0078d7;
  color: #fff;
  line-height: 15px;
  outline: 1px dotted #333;
}

.opt-checks {
  display: flex;
  flex-direction: column;
  margin: -2px 0 0 9px;
}

.opt-checks label {
  display: flex;
  align-items: center;
  gap: 4px;
  height: 23px;
  white-space: nowrap;
  letter-spacing: -.4px;
}

.opt-checks .check-long { letter-spacing: -.65px; }

.chk {
  width: 13px;
  height: 13px;
  background: #fff;
  border: 1px solid #333;
}

.opt-btn {
  align-self: flex-end;
  flex: none;
  width: 102px;
  height: 25px;
  margin: 0 0 0 auto;
}

.dlg-actions {
  display: flex;
  justify-content: flex-end;
  margin-top: 11px;
  height: 25px;
}

.act-all { width: 85px; }

.act-next {
  width: 77px;
  margin-left: 11px;
  background: #e5f1fb;
  border-radius: 1px;
  box-shadow: 0 0 0 6.500px #f00;
}

.act-close { width: 74px; margin-left: 20px; }

/* callout */
.callout {
  position: absolute;
  left: 943px;
  top: 521px;
  z-index: 6;
  display: flex;
  align-items: center;
  justify-content: center;
  width: 39px;
  height: 39px;
  background: #fff;
  border-radius: 50%;
  box-shadow: inset 0 0 0 2px #fff, inset 0 0 0 3.500px #e60012, 0 0 3px rgba(0, 0, 0, .3);
}

.callout span {
  font: 700 29px/1 "Liberation Sans", sans-serif;
  color: #e60012;
  text-shadow: 0 0 3px rgba(0, 0, 0, .35);
}
```
